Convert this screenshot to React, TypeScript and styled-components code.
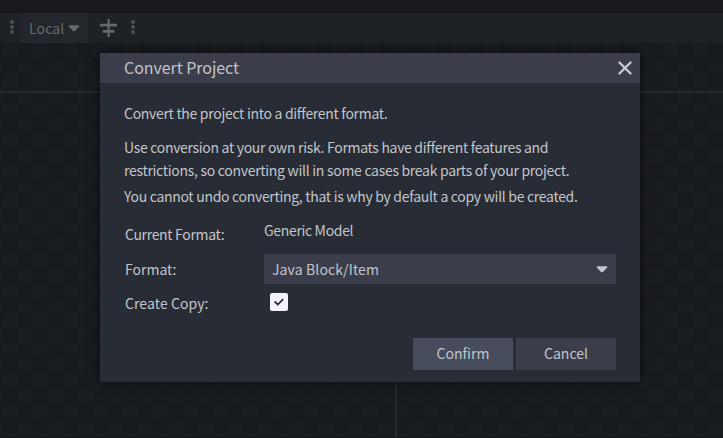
import React from "react";
import styled, { createGlobalStyle } from "styled-components";

const Global = createGlobalStyle`
  * { box-sizing: border-box; }
  body {
    margin: 0;
    background: #17191c;
    font-family: "Noto Sans CJK SC", "Noto Sans", sans-serif;
    font-size: 14px;
    color: #c3c5cc;
    overflow: hidden;
  }
`;

const Screen = styled.div`
  position: relative;
  width: 723px;
  height: 438px;
  display: flex;
  flex-direction: column;
  overflow: hidden;
  border-bottom: 1px solid #17151b;
`;

const TopBar = styled.div`
  flex: none;
  height: 13px;
  background: #17191c;
`;

const Toolbar = styled.div`
  flex: none;
  height: 30px;
  padding-left: 9px;
  background: #1e2125;
  display: flex;
  align-items: center;
  color: #67696d;
`;

const Grip = styled.svg`
  flex: none;
  display: block;
  width: 6px;
  height: 16px;
  margin-top: -2px;
  fill: #505256;
`;

const LocalSelect = styled.div`
  width: 67px;
  height: 30px;
  margin-left: 6px;
  padding-left: 8px;
  background: #23262d;
  display: flex;
  align-items: center;
  gap: 3.5px;
`;

const AlignIcon = styled.svg`
  display: block;
  width: 18px;
  height: 20px;
  margin: 0 12px;
  fill: #67696d;
`;

const Viewport = styled.div`
  flex: 1;
  display: flex;
  flex-direction: column;
  background: repeating-conic-gradient(#191c20 0 25%, #171a1e 0 50%) 18px 0 / 30px 30px;
`;

const UpperPane = styled.div`
  height: 50px;
  border-bottom: 2px solid #26292e;
`;

const LowerPane = styled.div`
  flex: 1;
  width: 397px;
  border-right: 2px solid #26292e;
`;

const Dialog = styled.div`
  position: absolute;
  left: 100px;
  top: 53px;
  width: 540px;
  height: 329px;
  background: #282c34;
  box-shadow: 0 0 10px rgba(0, 0, 0, 0.6);
`;

const Header = styled.div`
  height: 30px;
  padding: 0 8px 0 24px;
  background: #3b3e4a;
  display: flex;
  align-items: center;
  justify-content: space-between;
`;

const CloseIcon = styled.svg`
  display: block;
  width: 14px;
  height: 14px;
  stroke: #c9cbd3;
  stroke-width: 2.3;
  stroke-linecap: round;
`;

const Text = styled.span<{ $size?: number; $spacing?: number; $shift?: number }>`
  display: block;
  white-space: nowrap;
  line-height: 24px;
  font-size: ${(p) => p.$size ?? 14}px;
  letter-spacing: ${(p) => p.$spacing ?? 0}px;
  font-feature-settings: "liga" 1;
  margin-top: ${(p) => p.$shift ?? 0}px;
`;

const Body = styled.div`
  padding: 18px 24px 12px;
`;

const Description = styled.div`
  display: flex;
  flex-direction: column;
  height: 111px;
`;

const FormRow = styled.div<{ $height: number }>`
  display: grid;
  grid-template-columns: 139px 352px;
  padding-left: 1px;
  height: ${(p) => p.$height}px;
`;

const Select = styled.div`
  height: 30px;
  background: #3b3e4a;
  padding: 0 8px;
  display: flex;
  align-items: center;
  justify-content: space-between;
`;

const Caret = styled.svg`
  display: block;
  width: 12px;
  height: 7px;
  fill: currentColor;
`;

const Checkbox = styled.div`
  width: 18px;
  height: 18px;
  margin: 5px 0 0 6px;
  border-radius: 2px;
  background: #f3f2fd;
`;

const CheckIcon = styled.svg`
  display: block;
  width: 18px;
  height: 18px;
  fill: none;
  stroke: #282c34;
  stroke-width: 1.8;
`;

const Actions = styled.div`
  display: flex;
  justify-content: flex-end;
  gap: 3px;
`;

const Button = styled.div<{ $primary?: boolean }>`
  width: 100px;
  height: 32px;
  padding-bottom: 2px;
  background: ${(p) => (p.$primary ? "#474c5c" : "#3b3e4a")};
  display: flex;
  align-items: center;
  justify-content: center;
`;

const Dots = () => (
  <Grip viewBox="0 0 6 16">
    <circle cx="3" cy="3" r="1.9" />
    <circle cx="3" cy="8" r="1.9" />
    <circle cx="3" cy="13" r="1.9" />
  </Grip>
);

const Arrow = () => (
  <Caret viewBox="0 0 12 7">
    <path d="M1.3 .3H10.7Q11.8 .5 11.2 1.4L7 5.9Q6 6.8 5 5.9L.8 1.4Q.2 .5 1.3 .3Z" />
  </Caret>
);

export default function App() {
  return (
    <>
      <Global />
      <Screen>
        <TopBar />
        <Toolbar>
          <Dots />
          <LocalSelect>
            <Text $spacing={0.15}>Local</Text>
            <Arrow />
          </LocalSelect>
          <AlignIcon viewBox="0 0 18 20">
            <rect x="7.5" y="1" width="2.2" height="18" />
            <rect x="0" y="5.8" width="17" height="2.8" rx=".5" />
            <rect x="2.7" y="12" width="11.6" height="2.8" rx=".5" />
          </AlignIcon>
          <Dots />
        </Toolbar>
        <Viewport>
          <UpperPane />
          <LowerPane />
        </Viewport>
        <Dialog>
          <Header>
            <Text $size={16} $spacing={-0.05} $shift={-2}>Convert Project</Text>
            <CloseIcon viewBox="0 0 14 14">
              <path d="M1.5 1.5L12.5 12.5M12.5 1.5L1.5 12.5" />
            </CloseIcon>
          </Header>
          <Body>
            <Description>
              <Text $spacing={-0.3}>Convert the project into a different format.</Text>
              <Text $spacing={-0.31} $shift={10}>Use conversion at your own risk. Formats have different features and</Text>
              <Text $spacing={-0.29} $shift={-1}>restrictions, so converting will in some cases break parts of your project.</Text>
              <Text $spacing={-0.3} $shift={2}>You cannot undo converting, that is why by default a copy will be created.</Text>
            </Description>
            <FormRow $height={42}>
              <Text $spacing={-0.33} $shift={10}>Current Format:</Text>
              <Text $spacing={-0.33} $shift={6}>Generic Model</Text>
            </FormRow>
            <FormRow $height={34}>
              <Text $shift={3}>Format:</Text>
              <Select>
                <Text $spacing={0.12}>Java Block/Item</Text>
                <Arrow />
              </Select>
            </FormRow>
            <FormRow $height={50}>
              <Text $spacing={0.08} $shift={3}>Create Copy:</Text>
              <Checkbox>
                <CheckIcon viewBox="0 0 18 18">
                  <path d="M4.7 8.5L7.8 11.6L13.2 6.2" />
                </CheckIcon>
              </Checkbox>
            </FormRow>
            <Actions>
              <Button $primary>
                <Text>Confirm</Text>
              </Button>
              <Button>
                <Text>Cancel</Text>
              </Button>
            </Actions>
          </Body>
        </Dialog>
      </Screen>
    </>
  );
}
